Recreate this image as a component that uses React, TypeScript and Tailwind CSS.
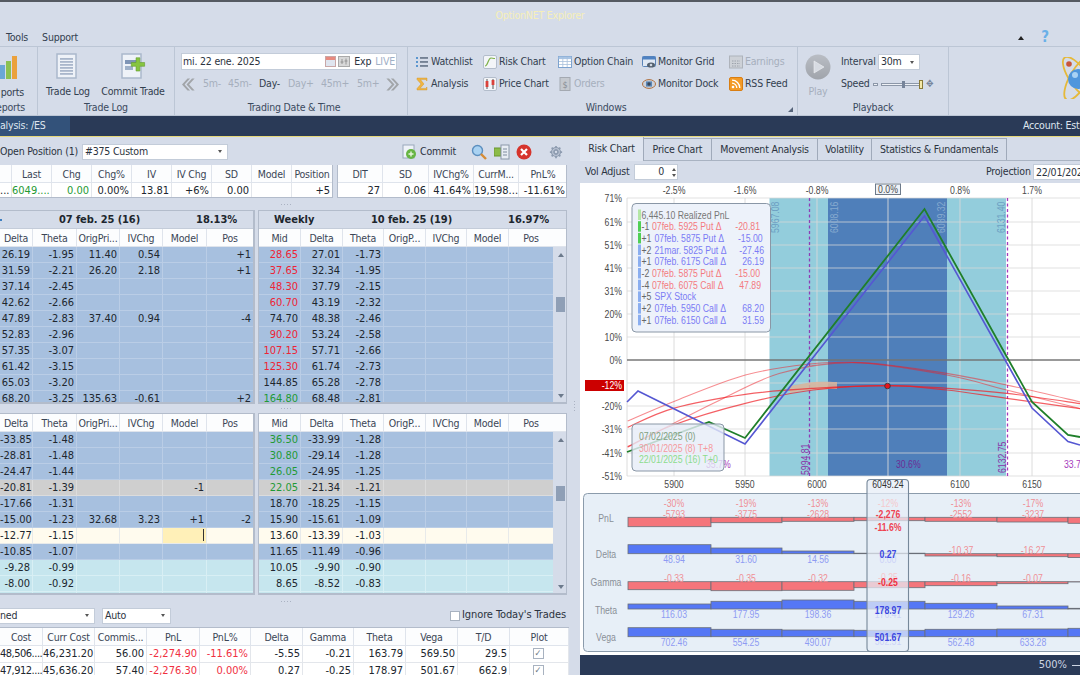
import React from 'react';

type Row = { cells: string[]; tone?: 'blue' | 'gray' | 'cream' | 'teal'; midColor?: string };

const RED = 'text-[#ee2436]';
const GREEN = 'text-[#1f9a35]';

const toneBg: Record<string, string> = {
  blue: 'bg-[#a7c0df]',
  gray: 'bg-[#cfcfcf]',
  cream: 'bg-[#fffbee]',
  teal: 'bg-[#c6e6ee]',
};

const toneLine: Record<string, string> = {
  blue: 'border-[#bacde6]',
  gray: 'border-[#dcdcdc]',
  cream: 'border-[#e8eaea]',
  teal: 'border-[#d8eff4]',
};

function Cell({ w, children, className = '', line = 'border-[#bacde6]' }: { w: number; children?: React.ReactNode; className?: string; line?: string }) {
  return (
    <div style={{ width: w }} className={`shrink-0 h-full border-r border-b ${line} pr-[2px] text-right leading-[15px] whitespace-nowrap overflow-hidden ${className}`}>
      {children}
    </div>
  );
}

function HeaderRow({ labels, widths, h = 18 }: { labels: string[]; widths: number[]; h?: number }) {
  return (
    <div style={{ height: h }} className="flex bg-[#fcfdfe] text-[10.5px] tracking-[-0.2px] text-[#3b4656]">
      {labels.map((l, i) => (
        <div key={i} style={{ width: widths[i] }} className="shrink-0 border-r border-b border-[#dfe4ec] text-center leading-[18px] whitespace-nowrap overflow-hidden">
          {l}
        </div>
      ))}
    </div>
  );
}

function DataRows({ rows, widths, caretCol }: { rows: Row[]; widths: number[]; caretCol?: number }) {
  return (
    <>
      {rows.map((r, i) => {
        const tone = r.tone ?? 'blue';
        return (
          <div key={i} className={`flex h-[16px] ${toneBg[tone]} text-[#20262e]`}>
            {widths.map((w, c) => (
              <Cell
                key={c}
                w={w}
                line={toneLine[tone]}
                className={`${c === 0 && r.midColor ? r.midColor : ''} ${tone === 'cream' && c === caretCol ? 'bg-[#fff0b8] relative' : ''}`}
              >
                {r.cells[c] ?? ''}
                {tone === 'cream' && c === caretCol && <span className="absolute right-[2px] top-[1px] h-[12px] w-[1px] bg-[#333]" />}
              </Cell>
            ))}
          </div>
        );
      })}
    </>
  );
}

function ScrollBar({ thumbTop }: { thumbTop: number }) {
  return (
    <div className="flex h-full w-[15px] shrink-0 flex-col items-center bg-[#d5dce9]">
      <span className="mt-[6px] h-0 w-0 border-x-[3px] border-b-[4px] border-x-transparent border-b-[#6c7a8c]" />
      <span style={{ marginTop: thumbTop }} className="h-[15px] w-[9px] bg-[#8f9fb6]" />
      <span className="mt-auto mb-[6px] h-0 w-0 border-x-[3px] border-t-[4px] border-x-transparent border-t-[#6c7a8c]" />
    </div>
  );
}

function Grip() {
  return <span className="h-[3px] w-[12px] bg-[radial-gradient(#aab2c2_1px,transparent_1px)] bg-[length:3px_3px]" />;
}

function Combo({ text, w, className = '' }: { text: string; w: number; className?: string }) {
  return (
    <div style={{ width: w }} className={`flex h-[16px] shrink-0 items-center justify-between border border-[#c3ccd9] bg-white pl-[2px] pr-[5px] text-[#2b3340] ${className}`}>
      <span className="whitespace-nowrap">{text}</span>
      <span className="h-0 w-0 border-x-[2.5px] border-t-[3px] border-x-transparent border-t-[#555]" />
    </div>
  );
}

/* ribbon icons */
function DocIcon({ plus }: { plus?: boolean }) {
  return (
    <svg width="28" height="28" viewBox="0 0 28 28">
      <rect x="3" y="2" width="19" height="24" fill="#eef2f8" stroke="#aab8cc" strokeWidth="1.5" />
      {plus ? (
        <>
          <rect x="6" y="8" width="13" height="4" fill="#7f95b6" />
          <rect x="6" y="14" width="8" height="4" fill="#9fb1c9" />
          <path d="M19 5h4v5h5v4h-5v5h-4v-5h-5v-4h5z" fill="#86c440" stroke="#5f9a28" strokeWidth=".6" transform="translate(-1 1) scale(.95)" />
        </>
      ) : (
        [6, 9, 12, 15, 18, 21].map((y) => <rect key={y} x="6" y={y} width="13" height="1.8" fill="#a9b6cb" />)
      )}
    </svg>
  );
}

function ReportsIcon() {
  return (
    <svg width="18" height="24" viewBox="0 0 18 24">
      <rect x="0" y="10" width="5" height="14" fill="#6ba7d6" />
      <rect x="6" y="6" width="5" height="18" fill="#8cc152" />
      <rect x="12" y="1" width="5" height="23" fill="#eba13c" />
    </svg>
  );
}

function Ico({ name }: { name: string }) {
  const s = { width: 14, height: 14, viewBox: '0 0 14 14', className: 'shrink-0' };
  switch (name) {
    case 'list':
      return (
        <svg {...s}>
          {[2, 6, 10].map((y) => (
            <g key={y}>
              <rect x="1" y={y} width="2" height="2" fill="#5b96cf" />
              <rect x="5" y={y + 0.3} width="8" height="1.3" fill="#4b5a70" />
            </g>
          ))}
        </svg>
      );
    case 'sigma':
      return (
        <svg {...s}>
          <path d="M2 1h10v3l-1.5-1.4H5.5L9 7l-4 4.4h5.5L12 10v3H2v-1.5L6 7 2 2.5z" fill="#f0b542" stroke="#c98f24" strokeWidth=".4" />
        </svg>
      );
    case 'risk':
      return (
        <svg {...s}>
          <rect x=".5" y=".5" width="13" height="13" rx="1.5" fill="#f3f5f8" stroke="#b3bdcb" />
          <path d="M2 11c3 0 3-8 6-8 1.5 0 2 .5 4 .5" fill="none" stroke="#7fb24a" strokeWidth="1.2" />
        </svg>
      );
    case 'price':
      return (
        <svg {...s}>
          <rect x=".5" y=".5" width="13" height="13" rx="1.5" fill="#f3f5f8" stroke="#b3bdcb" />
          <path d="M4 2v10M10 2v10" stroke="#555" />
          <rect x="2.6" y="4" width="2.8" height="6" fill="#d9413a" />
          <rect x="8.6" y="3" width="2.8" height="5" fill="#d9413a" />
        </svg>
      );
    case 'table':
      return (
        <svg {...s}>
          <rect x=".5" y="1.5" width="13" height="11" fill="#fff" stroke="#7da3cf" />
          <rect x=".5" y="1.5" width="13" height="2.6" fill="#a8c4e4" />
          <path d="M4.8 2v10M9.2 2v10M1 6.5h12M1 9.5h12" stroke="#a8c0dc" strokeWidth=".8" />
        </svg>
      );
    case 'orders':
      return (
        <svg {...s}>
          <rect x="2" y=".5" width="10" height="13" fill="#c5c9cf" stroke="#a4a9b1" />
          <text x="7" y="10.5" textAnchor="middle" fontSize="9" fill="#8a8f96">$</text>
        </svg>
      );
    case 'monitor':
      return (
        <svg {...s}>
          <rect x=".5" y="1.5" width="13" height="10" rx="1" fill="#dfe8f4" stroke="#5b84b8" />
          <rect x=".5" y="1.5" width="13" height="3" fill="#4f82c2" />
          <ellipse cx="9" cy="10" rx="4" ry="2.6" fill="#54616f" />
          <circle cx="9" cy="10" r="1.3" fill="#cfd8e3" />
        </svg>
      );
    case 'eye':
      return (
        <svg {...s}>
          <ellipse cx="7" cy="7" rx="6.5" ry="4.4" fill="#cbd3de" stroke="#b06f3c" />
          <rect x="4" y="4.4" width="6" height="5.2" fill="#5a86b6" />
          <circle cx="7" cy="7" r="1.7" fill="#3c4857" />
        </svg>
      );
    case 'earn':
      return (
        <svg {...s}>
          <rect x=".5" y="1" width="13" height="12" fill="#cdd1d7" stroke="#aeb3bb" />
          <path d="M3 6h8M3 8.5h8M3 11h8" stroke="#9da3ac" strokeDasharray="1.5 1" />
        </svg>
      );
    case 'rss':
      return (
        <svg {...s}>
          <rect x=".5" y=".5" width="13" height="13" rx="1.5" fill="#f39a26" stroke="#d97e12" />
          <circle cx="4" cy="10" r="1.3" fill="#fff" />
          <path d="M3 6.2a4.8 4.8 0 0 1 4.8 4.8M3 3.2A7.8 7.8 0 0 1 10.8 11" fill="none" stroke="#fff" strokeWidth="1.3" />
        </svg>
      );
    default:
      return null;
  }
}

function RibbonItem({ icon, text, muted }: { icon: string; text: string; muted?: boolean }) {
  return (
    <div className="flex h-[22px] items-center gap-[2px] whitespace-nowrap">
      <Ico name={icon} />
      <span className={muted ? 'text-[#a6afbd]' : 'text-[#33404f]'}>{text}</span>
    </div>
  );
}

function GroupLabel({ children }: { children: React.ReactNode }) {
  return <div className="mt-auto h-[15px] text-center leading-[15px] text-[#3b4a5e]">{children}</div>;
}

function Chevrons({ flip }: { flip?: boolean }) {
  return (
    <svg width="14" height="13" viewBox="0 0 14 13" className={flip ? 'shrink-0 -scale-x-100' : 'shrink-0'}>
      <path d="M6.5 0.5L1 6.5l5.5 6h2.6l-5.5-6 5.5-6z" fill="#a2a5a9" />
      <path d="M11 0.5L5.5 6.5l5.5 6h2.6l-5.5-6 5.5-6z" fill="#a2a5a9" />
    </svg>
  );
}

function Ribbon() {
  return (
    <div className="flex h-[70px] shrink-0 border-y border-[#bcc6d5] bg-[#d5dce9] text-[10.5px] tracking-[-0.2px]">
      <div className="flex w-[38px] shrink-0 flex-col items-end overflow-hidden border-r border-[#bcc6d5]">
        <div className="mt-[8px] flex h-[24px] w-[18px] self-start"><ReportsIcon /></div>
        <div className="mt-[6px] whitespace-nowrap pr-[13px] leading-[15px] text-[#33404f]">ports</div>
        <div className="mt-auto h-[15px] whitespace-nowrap pr-[12px] leading-[15px] text-[#3b4a5e]">eports</div>
      </div>
      <div className="flex w-[137px] shrink-0 flex-col border-r border-[#bcc6d5]">
        <div className="flex pt-[5px] leading-[15px] text-[#33404f]">
          <div className="ml-[7px] flex w-[46px] flex-col items-center whitespace-nowrap">
            <DocIcon />
            <span className="mt-[4px]">Trade Log</span>
          </div>
          <div className="ml-[10px] flex w-[64px] flex-col items-center whitespace-nowrap">
            <DocIcon plus />
            <span className="mt-[4px]">Commit Trade</span>
          </div>
        </div>
        <GroupLabel>Trade Log</GroupLabel>
      </div>
      <div className="flex w-[233px] shrink-0 flex-col border-r border-[#bcc6d5] pl-[6px]">
        <div className="mt-[6px] flex h-[17px] w-[216px] items-center border border-[#c3ccd9] bg-white pl-[1px] pr-[1px] text-[#2b3340]">
          <span className="grow">mi. 22 ene. 2025</span>
          <span className="mr-[2px] h-[11px] w-[11px] border border-[#c9a7a7] bg-[linear-gradient(#e88a7f_30%,#dfe5ef_30%)]" />
          <svg width="12" height="11" viewBox="0 0 12 11" className="mr-[4px] shrink-0">
            <rect x=".5" y=".5" width="11" height="10" fill="#d8d8d8" stroke="#aaa" />
            <path d="M4 3v5M8 2.5v6M2.5 6H5.5M6.5 5H9.5" stroke="#888" strokeWidth=".8" />
          </svg>
          <span className="mr-[4px]">Exp</span>
          <span className="text-[#9fb0c6]">LIVE</span>
        </div>
        <div className="mt-[6px] flex h-[16px] items-center whitespace-nowrap text-[#a6afbd]">
          <span className="w-[22px]"><Chevrons /></span>
          <span className="w-[25px]">5m-</span>
          <span className="w-[31px]">45m-</span>
          <span className="w-[29px] text-[#33404f]">Day-</span>
          <span className="w-[33px]">Day+</span>
          <span className="w-[36px]">45m+</span>
          <span className="w-[29px]">5m+</span>
          <Chevrons flip />
        </div>
        <GroupLabel>Trading Date &amp; Time</GroupLabel>
      </div>
      <div className="relative flex w-[390px] shrink-0 flex-col border-r border-[#bcc6d5] pl-[7px]">
        <div className="mt-[4px] flex">
          <div className="w-[68px]"><RibbonItem icon="list" text="Watchlist" /><RibbonItem icon="sigma" text="Analysis" /></div>
          <div className="w-[75px]"><RibbonItem icon="risk" text="Risk Chart" /><RibbonItem icon="price" text="Price Chart" /></div>
          <div className="w-[84px]"><RibbonItem icon="table" text="Option Chain" /><RibbonItem icon="orders" text="Orders" muted /></div>
          <div className="w-[87px]"><RibbonItem icon="monitor" text="Monitor Grid" /><RibbonItem icon="eye" text="Monitor Dock" /></div>
          <div><RibbonItem icon="earn" text="Earnings" muted /><RibbonItem icon="rss" text="RSS Feed" /></div>
        </div>
        <GroupLabel>Windows</GroupLabel>
        <span className="absolute bottom-[3px] right-[4px] h-0 w-0 border-b-[5px] border-l-[5px] border-b-[#56647a] border-l-transparent" />
      </div>
      <div className="flex w-[151px] shrink-0 flex-col border-r border-[#bcc6d5]">
        <div className="flex">
          <div className="ml-[7px] mt-[7px] flex w-[26px] flex-col items-center leading-[15px]">
            <svg width="26" height="26" viewBox="0 0 26 26">
              <defs>
                <linearGradient id="pl" x1="0" y1="0" x2="0" y2="1">
                  <stop offset="0" stopColor="#b9bdc4" />
                  <stop offset="1" stopColor="#a0a4ab" />
                </linearGradient>
              </defs>
              <circle cx="13" cy="13" r="12.5" fill="url(#pl)" />
              <path d="M9 7l10 6-10 6z" fill="#d7dbe2" stroke="#eef0f4" strokeWidth=".6" />
            </svg>
            <span className="mt-[4px] text-[#a6afbd]">Play</span>
          </div>
          <div className="ml-[10px] mt-[7px]">
            <div className="flex h-[16px] items-center whitespace-nowrap text-[#33404f]">
              <span className="w-[37px]">Interval</span>
              <Combo text="30m" w={42} />
            </div>
            <div className="mt-[6px] flex h-[16px] items-center whitespace-nowrap text-[#33404f]">
              <span className="w-[32px]">Speed</span>
              <span className="h-[3px] w-[5px] border border-[#8c97a8] bg-[#eef1f6]" />
              <span className="relative mx-[3px] h-[3px] w-[40px] border border-[#8c97a8] bg-[#eef1f6]">
                <span className="absolute left-[20px] top-[-3px] h-[7px] w-[3px] bg-[#76849a]" />
                <span className="absolute right-[-3px] top-[-4px] h-[9px] w-[4px] border border-[#8a7a38] bg-[#f5e8a8]" />
              </span>
              <span className="ml-[2px] text-[10px] leading-none text-[#76849a]">✥</span>
            </div>
          </div>
        </div>
        <GroupLabel>Playback</GroupLabel>
      </div>
      <div className="flex grow items-center justify-end overflow-hidden pb-[6px]">
        <svg width="28" height="42" viewBox="0 0 28 42" className="shrink-0">
          <ellipse cx="27" cy="21" rx="9" ry="25" fill="none" stroke="#e5b93a" strokeWidth="1.8" transform="rotate(30 27 21)" />
          <ellipse cx="27" cy="21" rx="9" ry="25" fill="none" stroke="#e5b93a" strokeWidth="1.8" transform="rotate(-35 27 21)" />
          <circle cx="26" cy="22" r="10" fill="#4f96dc" />
          <circle cx="23" cy="18" r="3" fill="#a8d2f5" />
          <circle cx="17" cy="7" r="2.8" fill="#c8553a" />
        </svg>
      </div>
    </div>
  );
}

const upperLeft: Row[] = [
  { cells: ['26.19', '-1.95', '11.40', '0.54', '', '+1'] },
  { cells: ['31.59', '-2.21', '26.20', '2.18', '', '+1'] },
  { cells: ['37.14', '-2.45'] },
  { cells: ['42.62', '-2.66'] },
  { cells: ['47.89', '-2.83', '37.40', '0.94', '', '-4'] },
  { cells: ['52.83', '-2.96'] },
  { cells: ['57.35', '-3.07'] },
  { cells: ['61.42', '-3.15'] },
  { cells: ['65.03', '-3.20'] },
  { cells: ['68.20', '-3.25', '135.63', '-0.61', '', '+2'] },
];

const upperRight: Row[] = [
  { cells: ['28.65', '27.01', '-1.73'], midColor: RED },
  { cells: ['37.65', '32.34', '-1.95'], midColor: RED },
  { cells: ['48.30', '37.79', '-2.15'], midColor: RED },
  { cells: ['60.70', '43.19', '-2.32'], midColor: RED },
  { cells: ['74.70', '48.38', '-2.46'] },
  { cells: ['90.20', '53.24', '-2.58'], midColor: RED },
  { cells: ['107.15', '57.71', '-2.66'], midColor: RED },
  { cells: ['125.30', '61.74', '-2.73'], midColor: RED },
  { cells: ['144.85', '65.28', '-2.78'] },
  { cells: ['164.80', '68.48', '-2.81'], midColor: GREEN },
];

const lowerLeft: Row[] = [
  { cells: ['-33.85', '-1.48'] },
  { cells: ['-28.81', '-1.48'] },
  { cells: ['-24.47', '-1.44'] },
  { cells: ['-20.81', '-1.39', '', '', '-1'], tone: 'gray' },
  { cells: ['-17.66', '-1.31'] },
  { cells: ['-15.00', '-1.23', '32.68', '3.23', '+1', '-2'] },
  { cells: ['-12.77', '-1.15'], tone: 'cream' },
  { cells: ['-10.85', '-1.07'] },
  { cells: ['-9.28', '-0.99'], tone: 'teal' },
  { cells: ['-8.00', '-0.92'], tone: 'teal' },
  { cells: [], tone: 'teal' },
];

const lowerRight: Row[] = [
  { cells: ['36.50', '-33.99', '-1.28'], midColor: GREEN },
  { cells: ['30.80', '-29.14', '-1.28'], midColor: GREEN },
  { cells: ['26.05', '-24.95', '-1.25'], midColor: GREEN },
  { cells: ['22.05', '-21.34', '-1.21'], tone: 'gray', midColor: GREEN },
  { cells: ['18.70', '-18.25', '-1.15'] },
  { cells: ['15.90', '-15.61', '-1.09'] },
  { cells: ['13.60', '-13.39', '-1.03'], tone: 'cream' },
  { cells: ['11.65', '-11.49', '-0.96'] },
  { cells: ['10.05', '-9.90', '-0.90'], tone: 'teal' },
  { cells: ['8.65', '-8.52', '-0.83'], tone: 'teal' },
  { cells: [], tone: 'teal' },
];

const leftWidths = [33, 44, 43, 43, 44, 47];
const leftLabels = ['Delta', 'Theta', 'OrigPri...', 'IVChg', 'Model', 'Pos'];
const rightWidths = [42, 42, 41, 42, 41, 42, 45];
const rightLabels = ['Mid', 'Delta', 'Theta', 'OrigP...', 'IVChg', 'Model', 'Pos'];

function GroupHead({ children }: { children: React.ReactNode }) {
  return <div className="relative h-[18px] border-b border-[#c4ccd9] bg-[#d5dce9] font-bold leading-[18px] text-[#20262e]">{children}</div>;
}

function ChainGrids({ upper }: { upper: boolean }) {
  return (
    <div className="flex h-full gap-[3px]">
      <div className="h-full w-[255px] overflow-hidden border-r-2 border-b-2 border-t border-[#b3bccb]">
        {upper && (
          <GroupHead>
            <span className="absolute left-0 top-[8px] h-[2px] w-[2px] bg-[#3f7fc0]" />
            <span className="absolute left-[59px] tracking-[-0.1px]">07 feb. 25 (16)</span>
            <span className="absolute left-[196px]">18.13%</span>
          </GroupHead>
        )}
        <HeaderRow labels={leftLabels} widths={leftWidths} />
        <DataRows rows={upper ? upperLeft : lowerLeft} widths={leftWidths} caretCol={4} />
      </div>
      <div className="h-full w-[309px] overflow-hidden border-x border-b-2 border-t border-[#b3bccb]">
        {upper && (
          <GroupHead>
            <span className="absolute left-[15px]">Weekly</span>
            <span className="absolute left-[112px] tracking-[-0.1px]">10 feb. 25 (19)</span>
            <span className="absolute left-[249px]">16.97%</span>
          </GroupHead>
        )}
        <div className="flex">
          <div className="w-[294px] shrink-0">
            <HeaderRow labels={rightLabels} widths={rightWidths} h={18} />
          </div>
          <div className="h-[18px] grow border-b border-[#dfe4ec] bg-[#fcfdfe]" />
        </div>
        <div className="flex h-full">
          <div className="w-[294px] shrink-0">
            <DataRows rows={upper ? upperRight : lowerRight} widths={rightWidths} />
          </div>
          <div className={upper ? 'h-[157px]' : 'h-[163px]'}>
            <ScrollBar thumbTop={upper ? 40 : 44} />
          </div>
        </div>
      </div>
    </div>
  );
}

function Summary() {
  const a = [12, 40, 40, 40, 40, 40, 40, 40, 41];
  const al = ['', 'Last', 'Chg', 'Chg%', 'IV', 'IV Chg', 'SD', 'Model', 'Position'];
  const b = [45, 46, 45, 45, 49];
  const bl = ['DIT', 'SD', 'IVChg%', 'CurrM...', 'PnL%'];
  const av = ['...', '6049....', '0.00', '0.00%', '13.81', '+6%', '0.00', '', '+5'];
  const bv = ['27', '0.06', '41.64%', '19,598...', '-11.61%'];
  return (
    <div className="flex h-[33px] shrink-0 gap-[4px]">
      <div className="w-[333px] overflow-hidden border-r border-b border-[#b3bccb]">
        <HeaderRow labels={al} widths={a} />
        <div className="flex h-[15px] bg-white text-[#20262e]">
          {a.map((w, i) => (
            <Cell key={i} w={w} line="border-[#e3e6eb]" className={`leading-[16px] ${i === 1 || i === 2 ? GREEN : ''}`}>{av[i]}</Cell>
          ))}
        </div>
      </div>
      <div className="w-[230px] overflow-hidden border-x border-b border-[#b3bccb]">
        <HeaderRow labels={bl} widths={b} />
        <div className="flex h-[15px] bg-white text-[#20262e]">
          {b.map((w, i) => (
            <Cell key={i} w={w} line="border-[#e3e6eb]" className="leading-[16px]">{bv[i]}</Cell>
          ))}
        </div>
      </div>
    </div>
  );
}

function Toolbar() {
  return (
    <div className="flex h-[28px] shrink-0 items-center pt-[1px] text-[10.5px] tracking-[-0.2px] text-[#2b3340]">
      <span className="w-[82px] shrink-0 whitespace-nowrap">Open Position (1)</span>
      <Combo text="#375 Custom" w={146} />
      <svg width="16" height="16" viewBox="0 0 16 16" className="ml-[174px] shrink-0">
        <rect x="1" y="1" width="11" height="13" fill="#eef2f8" stroke="#9aa8bc" />
        <circle cx="9" cy="10" r="5" fill="#67b544" />
        <path d="M9 7.5v5M6.5 10h5" stroke="#e8f5de" strokeWidth="1.4" />
      </svg>
      <span className="ml-[2px] w-[37px] shrink-0">Commit</span>
      <svg width="16" height="16" viewBox="0 0 16 16" className="ml-[14px] shrink-0">
        <circle cx="6.5" cy="6.5" r="5" fill="#a9d2f2" stroke="#5c8fbf" strokeWidth="1.4" />
        <path d="M10 10l5 5" stroke="#d68c35" strokeWidth="2.4" />
      </svg>
      <svg width="16" height="16" viewBox="0 0 16 16" className="ml-[7px] shrink-0">
        <rect x="0" y="4" width="7" height="8" fill="#8cbc48" stroke="#6a9530" />
        <rect x="7" y="1" width="8" height="14" fill="#e8edf4" stroke="#8b98aa" />
        <path d="M9 5h4M9 8h4M9 11h4" stroke="#7e8c9e" />
      </svg>
      <svg width="16" height="16" viewBox="0 0 16 16" className="ml-[6px] shrink-0">
        <circle cx="8" cy="8" r="7.5" fill="#d6342c" />
        <path d="M5 5l6 6M11 5l-6 6" stroke="#fff" strokeWidth="2.2" />
      </svg>
      <svg width="14" height="14" viewBox="0 0 24 24" className="ml-[17px] shrink-0" fill="none" stroke="#8e9cb0" strokeWidth="3">
        <circle cx="12" cy="12" r="3.5" />
        <path d="M12 1.5v4M12 18.5v4M1.5 12h4M18.5 12h4M4.6 4.6l2.8 2.8M16.6 16.6l2.8 2.8M4.6 19.4l2.8-2.8M16.6 7.4l2.8-2.8" />
        <circle cx="12" cy="12" r="7.5" strokeWidth="2.4" />
      </svg>
    </div>
  );
}

function BottomTable() {
  const w = [43, 52, 52, 53, 51, 52, 51, 52, 52, 52, 59];
  const l = ['Cost', 'Curr Cost', 'Commis...', 'PnL', 'PnL%', 'Delta', 'Gamma', 'Theta', 'Vega', 'T/D', 'Plot'];
  const rows = [
    ['48,506....', '46,231.20', '56.00', '-2,274.90', '-11.61%', '-5.55', '-0.21', '163.79', '569.50', '29.5'],
    ['47,912....', '45,636.20', '57.40', '-2,276.30', '0.00%', '0.27', '-0.25', '178.97', '501.67', '662.9'],
  ];
  return (
    <div className="mt-[3px] w-[569px] shrink-0 border-t border-r border-[#b3bccb]">
      <HeaderRow labels={l} widths={w} />
      {rows.map((r, i) => (
        <div key={i} className="flex h-[17px] bg-white text-[#20262e]">
          {w.map((cw, c) => (
            <Cell key={c} w={cw} line="border-[#e3e6eb]" className={`leading-[16px] ${c === 0 ? 'tracking-[-0.5px]' : ''} ${c === 3 || c === 4 ? 'text-[#f0303f]' : ''}`}>
              {c === 10 ? (
                <span className="mx-auto mt-[2px] flex h-[11px] w-[11px] items-center justify-center border border-[#a8b2c0] text-[9px] leading-none text-[#6c7684]">✓</span>
              ) : (
                r[c]
              )}
            </Cell>
          ))}
        </div>
      ))}
    </div>
  );
}

function LeftPanel() {
  return (
    <div className="flex w-[572px] shrink-0 flex-col overflow-hidden">
      <Toolbar />
      <Summary />
      <div className="flex h-[12px] shrink-0 items-center justify-center"><Grip /></div>
      <div className="h-[194px] shrink-0 overflow-hidden"><ChainGrids upper /></div>
      <div className="flex h-[9px] shrink-0 items-center justify-center"><Grip /></div>
      <div className="h-[182px] shrink-0 overflow-hidden"><ChainGrids upper={false} /></div>
      <div className="flex h-[12px] shrink-0 items-center justify-center"><Grip /></div>
      <div className="flex h-[17px] shrink-0 items-center text-[10.5px] tracking-[-0.2px] text-[#2b3340]">
        <Combo text="ned" w={98} className="-ml-[3px]" />
        <Combo text="Auto" w={69} className="ml-[7px]" />
        <span className="ml-[279px] h-[10px] w-[10px] shrink-0 border border-[#a8b2c0] bg-white" />
        <span className="ml-[2px] whitespace-nowrap text-[11px] tracking-[-0.1px]">Ignore Today's Trades</span>
      </div>
      <BottomTable />
    </div>
  );
}

/* chart helpers */
const AX = '#4a4a4a';

function smooth(p: number[][]) {
  let d = `M${p[0][0]} ${p[0][1]}`;
  for (let i = 0; i < p.length - 1; i++) {
    const a = p[Math.max(i - 1, 0)];
    const b = p[i];
    const c = p[i + 1];
    const e = p[Math.min(i + 2, p.length - 1)];
    d += `C${b[0] + (c[0] - a[0]) / 6} ${b[1] + (c[1] - a[1]) / 6} ${c[0] - (e[0] - b[0]) / 6} ${c[1] - (e[1] - b[1]) / 6} ${c[0]} ${c[1]}`;
  }
  return d;
}

// chart text is horizontally squeezed in the screenshot
function T({ x, y, fill = AX, anchor, rot, bold, opacity, children }: { x: number; y: number; fill?: string; anchor?: 'middle' | 'end'; rot?: boolean; bold?: boolean; opacity?: number; children: React.ReactNode }) {
  return (
    <text
      transform={`translate(${x} ${y})${rot ? ' rotate(-90)' : ''} scale(.87 1)`}
      textAnchor={anchor}
      fill={fill}
      fontWeight={bold ? 700 : undefined}
      opacity={opacity}
    >
      {children}
    </text>
  );
}

const zp = (pts: number[][]) => pts.map(([x, y]) => [580 + x / 3, 340 + y / 3]);

const curves = [
  { o: 0.5, w: 1.1, p: zp([[143, 243], [280, 185], [496, 105], [690, 72], [820, 67], [925, 75], [1100, 100], [1280, 135], [1510, 188]]) },
  { o: 0.5, w: 1.1, p: zp([[143, 322], [400, 190], [600, 100], [820, 68], [1100, 105], [1280, 150], [1510, 208]]) },
  { o: 0.7, w: 1.2, p: zp([[143, 262], [280, 205], [496, 163], [700, 145], [925, 137], [1100, 145], [1280, 160], [1510, 192]]) },
  { o: 0.7, w: 1.2, p: zp([[143, 320], [280, 255], [496, 190], [700, 150], [925, 137], [1100, 150], [1280, 175], [1510, 207]]) },
];

const yTicks: [string, number][] = [
  ['71%', 198], ['61%', 222], ['51%', 245], ['41%', 268], ['31%', 291], ['20%', 314], ['10%', 337],
  ['0%', 360], ['-20%', 406], ['-31%', 429], ['-41%', 453], ['-51%', 476],
];

const xTicks: [string, number, string][] = [
  ['5900', 674, '-2.5%'], ['5950', 745, '-1.6%'], ['6000', 817, '-0.8%'], ['6100', 960, '0.8%'], ['6150', 1032, '1.7%'],
];

const legend: { bar: string; pre: string; text: string; val?: string; vx?: number; tone: string }[] = [
  { bar: '#b4e6a6', pre: '', text: '6,445.10 Realized PnL', tone: '#777' },
  { bar: '#4fcf55', pre: '-1', text: '07feb. 5925 Put Δ', val: '-20.81', vx: 760, tone: '#f47a7f' },
  { bar: '#4fcf55', pre: '+1', text: '07feb. 5875 Put Δ', val: '-15.00', vx: 762.6, tone: '#7b7cf5' },
  { bar: '#8aaef0', pre: '+2', text: '21mar. 5825 Put Δ', val: '-27.46', vx: 764, tone: '#7b7cf5' },
  { bar: '#8aaef0', pre: '+1', text: '07feb. 6175 Call Δ', val: '26.19', vx: 764, tone: '#7b7cf5' },
  { bar: '#8aaef0', pre: '-2', text: '07feb. 5875 Put Δ', val: '-15.00', vx: 760, tone: '#f47a7f' },
  { bar: '#8aaef0', pre: '-4', text: '07feb. 6075 Call Δ', val: '47.89', vx: 761, tone: '#f47a7f' },
  { bar: '#8aaef0', pre: '+5', text: 'SPX Stock', tone: '#7b7cf5' },
  { bar: '#8aaef0', pre: '+2', text: '07feb. 5950 Call Δ', val: '68.20', vx: 764, tone: '#7b7cf5' },
  { bar: '#8aaef0', pre: '+1', text: '07feb. 6150 Call Δ', val: '31.59', vx: 764, tone: '#7b7cf5' },
];

const colEdges = [628, 711, 782, 854, 925, 997, 1068, 1081];

type BarRow = { label: string; ly: number; base: number; ends: number[]; fill: string[] };

const P = '#f5757b';
const B = '#5577f5';
const barRows: BarRow[] = [
  { label: 'PnL', ly: 518, base: 517.3, ends: [526.7, 522.7, 521.3, 520.7, 521.3, 522, 523.3], fill: [P, P, P, P, P, P, P] },
  { label: 'Delta', ly: 554.5, base: 553.7, ends: [544.7, 548, 551, 553.2, 556, 556.7, 557.6], fill: [B, B, B, B, P, P, P] },
  { label: 'Gamma', ly: 582, base: 581.7, ends: [589.7, 590.7, 590.3, 587.7, 585.7, 583.7, 582], fill: [P, P, P, P, P, P, P] },
  { label: 'Theta', ly: 610, base: 609, ends: [604, 601.3, 600, 601.3, 603.3, 606, 608.3], fill: [B, B, B, B, B, B, B] },
  { label: 'Vega', ly: 637, base: 636.7, ends: [627.7, 629.3, 630, 630.3, 629.3, 629, 628.3], fill: [B, B, B, B, B, B, B] },
];

type Lab = [string, number, number, string];
const PINK = '#ef8f96';
const LB = '#8e9bf3';
const labels: Lab[] = [
  ['-30%', 674, 503, PINK], ['-19%', 746, 503, PINK], ['-13%', 818, 503, PINK], ['-13%', 961, 503, PINK], ['-17%', 1033, 503, PINK],
  ['-5793', 674, 514, PINK], ['-3775', 746, 514, PINK], ['-2628', 818, 514, PINK], ['-2552', 961, 514, PINK], ['-3237', 1033, 514, PINK],
  ['48.94', 674, 559, LB], ['31.60', 746, 559, LB], ['14.56', 818, 559, LB], ['-10.37', 961, 550, PINK], ['-16.27', 1033, 550, PINK],
  ['-0.33', 674, 578, PINK], ['-0.35', 746, 578, PINK], ['-0.32', 818, 578, PINK], ['-0.16', 961, 578, PINK], ['-0.07', 1033, 578, PINK],
  ['116.03', 674, 614.5, LB], ['177.95', 746, 614.5, LB], ['198.36', 818, 614.5, LB], ['129.26', 961, 614.5, LB], ['67.31', 1033, 614.5, LB],
  ['702.46', 674, 642, LB], ['554.25', 746, 642, LB], ['490.07', 818, 642, LB], ['562.48', 961, 642, LB], ['633.28', 1033, 642, LB],
];

const bandLabels: [string, number, string][] = [
  ['5967.08', 779, '#6d9fc3'],
  ['6008.16', 838, '#86aacf'],
  ['6089.32', 945, '#86aacf'],
  ['6131.40', 1005, '#6d9fc3'],
];

function RiskChart() {
  return (
    <svg viewBox="580 183 500 472" width="500" height="472" className="block shrink-0 [font-family:'Liberation_Sans',sans-serif] [font-stretch:normal]" fontSize="10">
      <rect x="580" y="183" width="500" height="472" fill="#fff" />
      {/* bands */}
      <rect x="769.5" y="198" width="236.5" height="278" fill="#93cddc" />
      <rect x="828" y="198" width="119" height="278" fill="#4f7fba" />
      {/* grid */}
      {yTicks.map(([, y]) => <line key={y} x1="627" x2="1080" y1={y} y2={y} stroke="#d8d8d8" strokeOpacity=".75" strokeWidth="1.2" />)}
      <line x1="627" x2="1080" y1="383" y2="383" stroke="#d8d8d8" strokeOpacity=".75" strokeWidth="1.2" />
      {[627, 674, 745, 817, 888, 960, 1032].map((x) => <line key={x} x1={x} x2={x} y1="198" y2="476" stroke="#d8d8d8" strokeOpacity=".75" strokeWidth="1.2" />)}
      <line x1="627" x2="1080" y1="360" y2="360" stroke="#555" strokeOpacity=".75" strokeWidth="1.4" />
      {/* axes */}
      {yTicks.map(([t, y]) => <T key={t} x={622} y={y + 3.5} anchor="end">{t}</T>)}
      {xTicks.map(([t, x, p]) => (
        <g key={t}>
          <T x={x} y={488} anchor="middle">{t}</T>
          <T x={x} y={194} anchor="middle">{p}</T>
        </g>
      ))}
      <rect x="875.5" y="184" width="25" height="10.5" fill="#eef2f7" stroke="#6d7a8a" />
      <T x={888} y={193} anchor="middle">0.0%</T>
      {/* band labels */}
      {bandLabels.map(([t, x, c]) => <T key={t} x={x} y={233} rot fill={c}>{t}</T>)}
      <line x1="809.5" x2="809.5" y1="198" y2="476" stroke="#8e3db5" strokeDasharray="3 2.5" strokeWidth="1.3" />
      <line x1="1007.5" x2="1007.5" y1="198" y2="476" stroke="#a53bbd" strokeDasharray="3 2.5" strokeWidth="1.3" />
      <T x={809} y={475} rot fill="#8a35a8">5994.81</T>
      <T x={1006} y={473} rot fill="#8a35a8">6132.75</T>
      <T x={706} y={468} fill="#a53bbd">35.7%</T>
      <T x={896} y={468} fill="#6c2d96">30.6%</T>
      <T x={1064} y={468} fill="#a53bbd">33.7%</T>
      {/* curves */}
      <path d="M790 386c20-4 25-5 47-4v7c-22 0-30 1-47 4z" fill="#dcb49a" opacity=".85" />
      {curves.map((c, i) => (
        <path key={i} d={smooth(c.p)} fill="none" stroke="#f01c24" strokeOpacity={c.o} strokeWidth={c.w} />
      ))}
      <polyline points="627,452 709,422 745,438 924.5,209 1032,402 1068,435 1080,437" fill="none" stroke="#1f7f2a" strokeWidth="1.8" />
      <polyline points="627,402 638,391 745,444 924.5,216 1032,408 1068,441.5 1080,445" fill="none" stroke="#5557d2" strokeWidth="1.6" />
      <circle cx="887.5" cy="386" r="2.8" fill="#e8141c" stroke="#333" strokeWidth=".8" />
      <rect x="585" y="380" width="39" height="11" fill="#cc0000" />
      <T x={622} y={389} anchor="end" fill="#fff">-12%</T>
      {/* legend */}
      <rect x="632" y="203.5" width="138.5" height="128.5" rx="4" fill="#edf2fa" stroke="#8a97a6" />
      {legend.map((l, i) => {
        const y = 215 + i * 11.7;
        return (
          <g key={i}>
            <rect x="638" y={y - 5.5} width="3" height="10.5" fill={l.bar} />
            {l.pre ? (
              <>
                <T x={641.5} y={y + 3.5} fill="#666">{l.pre}</T>
                <T x={l.pre[0] === '+' ? 654.5 : 652} y={y + 3.5} fill={l.tone}>{l.text}</T>
              </>
            ) : (
              <T x={641.5} y={y + 3.5} fill={l.tone}>{l.text}</T>
            )}
            {l.val && <T x={l.vx ?? 764} y={y + 3.5} anchor="end" fill={l.tone}>{l.val}</T>}
          </g>
        );
      })}
      <rect x="632" y="424" width="92" height="47" rx="4" fill="#e6ecf7" fillOpacity=".8" stroke="#8a97a6" />
      <T x={639} y={440} fill="#7fa07f">07/02/2025 (0)</T>
      <T x={639} y={451.5} fill="#f59a9e">30/01/2025 (8) T+8</T>
      <T x={639} y={463} fill="#8ddc8d">22/01/2025 (16) T+0</T>
      {/* summary panel */}
      <rect x="583.5" y="493.5" width="510" height="158" rx="4" fill="#e7eff7" stroke="#8b9bab" />
      {barRows.map((r) => (
        <g key={r.label}>
          <T x={606} y={r.ly + 3.5} anchor="middle" fill="#8a8f98">{r.label}</T>
          {r.ends.map((e, i) => (
            <rect key={i} x={colEdges[i]} y={Math.min(e, r.base)} width={colEdges[i + 1] - colEdges[i]} height={Math.abs(e - r.base)} fill={r.fill[i]} stroke="#6a6f78" strokeWidth=".8" />
          ))}
        </g>
      ))}
      {labels.map(([t, x, y, c], i) => <T key={i} x={x} y={y + 3.5} anchor="middle" fill={c}>{t}</T>)}
      {/* cursor column */}
      <rect x="867" y="479.5" width="41.5" height="172" rx="3.5" fill="#e6edf6" fillOpacity=".72" stroke="#76889a" strokeWidth="1.1" />
      <T x={888} y={488} anchor="middle" fill="#333">6049.24</T>
      <T x={888} y={506.5} anchor="middle" fill="#f5c9cd">-12%</T>
      <T x={888} y={518} anchor="middle" fill="#f0303f" bold opacity={0.9}>-2,276</T>
      <T x={888} y={530.5} anchor="middle" fill="#f0303f" bold opacity={0.9}>-11.6%</T>
      <T x={888} y={563} anchor="middle" fill="#cdd3f7">0.00</T>
      <T x={888} y={558} anchor="middle" fill="#3a47e0" bold>0.27</T>
      <T x={888} y={581} anchor="middle" fill="#f5c9cd">-0.25</T>
      <T x={888} y={586} anchor="middle" fill="#f0303f" bold>-0.25</T>
      <T x={888} y={618} anchor="middle" fill="#cdd3f7">176.41</T>
      <T x={888} y={613.5} anchor="middle" fill="#3a47e0" bold>178.97</T>
      <T x={888} y={645} anchor="middle" fill="#cdd3f7">502.51</T>
      <T x={888} y={641} anchor="middle" fill="#3a47e0" bold>501.67</T>
    </svg>
  );
}

const tabs: [string, number][] = [
  ['Risk Chart', 64], ['Price Chart', 68], ['Movement Analysis', 106], ['Volatility', 54], ['Statistics & Fundamentals', 135],
];

function RightPanel() {
  return (
    <div className="flex w-[500px] shrink-0 flex-col overflow-hidden">
      <div className="flex h-[24px] shrink-0 items-end border-b border-[#a9b3c2] text-[10.5px] tracking-[-0.2px]">
        {tabs.map(([t, w], i) => (
          <div
            key={t}
            style={{ width: w }}
            className={`flex shrink-0 items-center justify-center whitespace-nowrap border-r border-[#a0aaba] text-[#2b3340] ${i === 0 ? 'h-[24px] -mb-[1px] bg-[#dfe5f0]' : 'h-[22px] border-t bg-[#d5dce9]'}`}
          >
            {t}
          </div>
        ))}
      </div>
      <div className="flex h-[22px] shrink-0 items-center text-[10.5px] tracking-[-0.2px] text-[#2b3340]">
        <span className="ml-[5px] w-[49px] shrink-0 whitespace-nowrap">Vol Adjust</span>
        <div className="flex h-[16px] w-[44px] shrink-0 items-center justify-end border border-[#c3ccd9] bg-white pr-[1px]">
          <span className="mr-[8px]">0</span>
          <span className="flex flex-col gap-[3px]">
            <span className="h-0 w-0 border-x-[2.5px] border-b-[3px] border-x-transparent border-b-[#555]" />
            <span className="h-0 w-0 border-x-[2.5px] border-t-[3px] border-x-transparent border-t-[#555]" />
          </span>
        </div>
        <span className="ml-[308px] w-[47px] shrink-0 whitespace-nowrap">Projection</span>
        <div className="h-[16px] w-[60px] shrink-0 overflow-hidden whitespace-nowrap border border-[#c3ccd9] bg-white pl-[2px] leading-[14px]">22/01/2025</div>
      </div>
      <RiskChart />
      <div className="flex h-[20px] shrink-0 items-center justify-end bg-[#2a3a57] text-[11px] text-[#cdd5e2]">
        <span className="mr-[5px]">500%</span>
        <span className="h-[1px] w-[8px] bg-[#cdd5e2]" />
      </div>
    </div>
  );
}

export default function App() {
  return (
    <div className="flex h-[675px] w-[1080px] flex-col overflow-hidden bg-[#d5dce9] text-[11px] text-[#2b3340] [font-family:'DejaVu_Sans',sans-serif] [font-stretch:condensed]">
      <div className="h-[2px] shrink-0 bg-[#555a62]" />
      <div className="flex h-[27px] shrink-0 items-center justify-center text-[10.5px] tracking-[-0.2px] text-[#f5efb8]">OptionNET Explorer</div>
      <div className="flex h-[17px] shrink-0 items-center pl-[6px] text-[10.5px] tracking-[-0.2px] text-[#33404f]">
        <span>Tools</span>
        <span className="ml-[14px]">Support</span>
        <span className="ml-auto h-0 w-0 border-x-[3px] border-b-[4px] border-x-transparent border-b-[#222]" />
        <span className="ml-[17px] mr-[31px] text-[15px] font-bold leading-none text-[#6ab0e8]">?</span>
      </div>
      <Ribbon />
      <div className="flex h-[20px] shrink-0 items-center bg-[#2a3a57] text-[10.5px] tracking-[-0.2px] text-[#dfe6f0]">
        <div className="flex h-full w-[70px] items-center overflow-hidden whitespace-nowrap bg-[#33527a]">alysis: /ES</div>
        <span className="ml-auto mr-[-2px] w-[59px] whitespace-nowrap">Account: Est</span>
      </div>
      <div className="h-[1px] shrink-0 bg-[#e5d77a]" />
      <div className="flex min-h-0 grow">
        <LeftPanel />
        <div className="flex w-[8px] shrink-0 items-center justify-start pl-[1px]">
          <span className="h-[12px] w-[3px] bg-[radial-gradient(#aab2c2_1px,transparent_1px)] bg-[length:3px_3px]" />
        </div>
        <RightPanel />
      </div>
    </div>
  );
}
